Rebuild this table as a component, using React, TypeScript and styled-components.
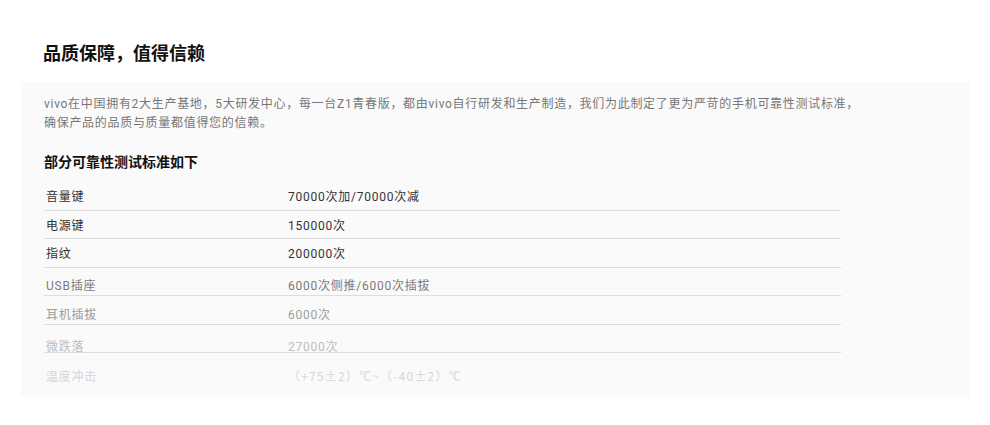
import React from "react"
import styled, { createGlobalStyle } from "styled-components"

const GlobalStyle = createGlobalStyle`
    html, body {
        margin: 0;
        padding: 0;
        background: #ffffff;
        font-family: Roboto, "Noto Sans CJK SC", sans-serif;
    }
`

// shift: the lower rows of the picture sit a little below their cell centre
const rows = [
    { name: "音量键", value: "70000次加/70000次减", color: "#333333", shift: 0 },
    { name: "电源键", value: "150000次", color: "#333333", shift: 0 },
    { name: "指纹", value: "200000次", color: "#333333", shift: 0 },
    { name: "USB插座", value: "6000次侧推/6000次插拔", color: "#7a7a7a", shift: 3 },
    { name: "耳机插拔", value: "6000次", color: "#9c9c9c", shift: 4 },
    { name: "微跌落", value: "27000次", color: "#bdbdbd", shift: 6 },
    { name: "温度冲击", value: "（+75±2）℃~（-40±2）℃", color: "#d6d6d6", shift: 7, cjk: true },
]

const App = () => {
    return (
        <Page>
            <GlobalStyle />
            <Title>品质保障，值得信赖</Title>
            <Panel>
                <Intro>
                    vivo在中国拥有2大生产基地，5大研发中心，每一台Z1青春版，都由vivo自行研发和生产制造，我们为此制定了更为严苛的手机可靠性测试标准，
                    <br />
                    确保产品的品质与质量都值得您的信赖。
                </Intro>
                <SubTitle>部分可靠性测试标准如下</SubTitle>
                <Table>
                    {rows.map((r, i) => (
                        <Row key={r.name} $color={r.color} $last={i === rows.length - 1} $shift={r.shift}>
                            <NameCell>{r.name}</NameCell>
                            <ValueCell $cjk={!!r.cjk}>{r.value}</ValueCell>
                        </Row>
                    ))}
                </Table>
            </Panel>
        </Page>
    )
}

const Page = styled.div`
    width: 990px;
    padding-top: 40px;
`
const Title = styled.h2`
    margin: 0 0 18px 43px;
    font-size: 18px;
    line-height: 24px;
    font-weight: 700;
    color: #111111;
    font-family: "Noto Sans CJK SC", sans-serif;
`
const Panel = styled.section`
    margin: 0 20px 0 21px;
    height: 315px;
    box-sizing: border-box;
    background: #fafafa;
    padding: 13px 0 0 23px;
`
const Intro = styled.p`
    margin: 0;
    font-size: 12px;
    line-height: 19px;
    letter-spacing: 0.7px;
    color: #777777;
    white-space: nowrap;
`
const SubTitle = styled.h3`
    margin: 18px 0 0 0;
    font-size: 14px;
    line-height: 20px;
    font-weight: 700;
    color: #111111;
    font-family: "Noto Sans CJK SC", sans-serif;
`
const Table = styled.div`
    margin-top: 11px;
    width: 797px;
    display: flex;
    flex-direction: column;
`
const Row = styled.div<{ $color: string; $last: boolean; $shift: number }>`
    display: grid;
    grid-template-columns: 244px 1fr;
    align-items: center;
    height: 28.5px;
    box-sizing: border-box;
    padding-top: ${props => props.$shift * 2}px;
    border-bottom: 1px solid ${props => props.$last ? "transparent" : "#dddddd"};
    font-size: 12px;
    letter-spacing: 0.75px;
    color: ${props => props.$color};
`
const NameCell = styled.div`
    padding-left: 2px;
    white-space: nowrap;
`
const ValueCell = styled.div<{ $cjk: boolean }>`
    white-space: nowrap;
    font-family: ${props => props.$cjk ? `"Noto Sans CJK SC", sans-serif` : "inherit"};
    letter-spacing: ${props => props.$cjk ? "1.2px" : "inherit"};
`

export default App
